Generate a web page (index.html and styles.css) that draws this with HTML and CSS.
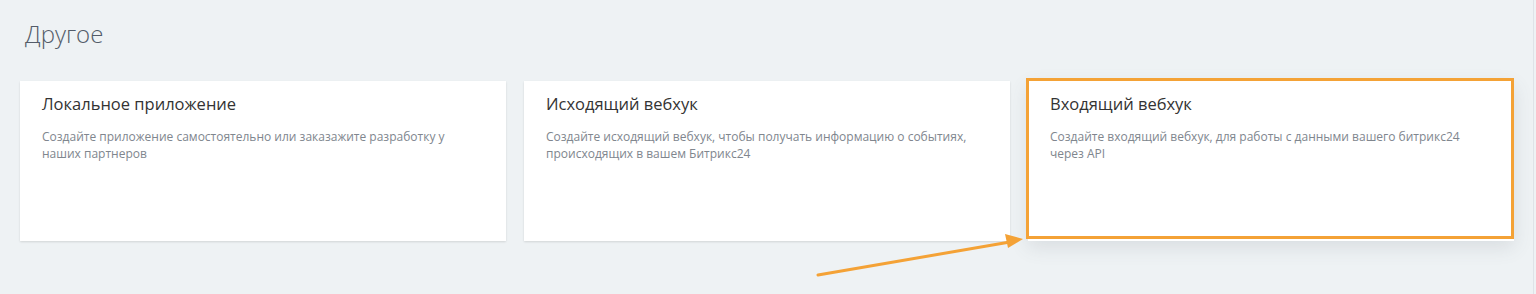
FILE: index.html
```html
<!DOCTYPE html>
<html lang="ru">
<head>
	<meta charset="UTF-8">
	<meta name="viewport" content="width=device-width, initial-scale=1.0">
	<title>Другое</title>
	<link rel="stylesheet" href="styles.css">
</head>
<body>
	<div class="page">
		<h2 class="section-title">Другое</h2>

		<div class="cards">
			<div class="card">
				<div class="card-title">Локальное приложение</div>
				<div class="card-text">Создайте приложение самостоятельно или заказажите разработку у наших партнеров</div>
			</div>
			<div class="card">
				<div class="card-title">Исходящий вебхук</div>
				<div class="card-text">Создайте исходящий вебхук, чтобы получать информацию о событиях, происходящих в вашем Битрикс24</div>
			</div>
			<div class="card card-hover">
				<div class="card-title">Входящий вебхук</div>
				<div class="card-text">Создайте входящий вебхук, для работы с данными вашего битрикс24 через API</div>
			</div>
		</div>

		<!-- пометка поверх скриншота -->
		<div class="mark-box"></div>
		<svg class="mark-arrow" width="220" height="50" viewBox="0 0 220 50">
			<line x1="2" y1="46" x2="194" y2="13" stroke="#f4a236" stroke-width="3" stroke-linecap="round"/>
			<polygon points="207,10 189,5 192,19" fill="#f4a236"/>
		</svg>
	</div>
</body>
</html>
```

FILE: styles.css
```css
*,
*::before,
*::after {
	padding: 0;
	margin: 0;
	box-sizing: border-box;
}
body {
	background: #eef2f4;
	font-family: "Open Sans", "Liberation Sans", sans-serif;
}

.page {
	position: relative;
	width: 1534px;
	height: 294px;
	padding: 19px 20px 0;
	border-right: 1px solid #dfe3e7;
}

.section-title {
	font-size: 24px;
	line-height: 30px;
	font-weight: 300;
	color: #535c69;
	padding-left: 5px;
	margin-bottom: 32px;
}

.cards {
	display: grid;
	grid-template-columns: repeat(3, 486px);
	gap: 18px;
}

.card {
	height: 160px;
	background: #fff;
	padding: 13px 22px 0;
	box-shadow: 0 1px 2px rgba(0, 0, 0, 0.12);
}

.card-hover {
	box-shadow: 0 6px 18px rgba(83, 92, 105, 0.14);
}

.card-title {
	font-size: 16.5px;
	line-height: 20px;
	font-weight: 500;
	color: #333;
	margin-bottom: 14px;
}

.card-text {
	font-size: 12px;
	line-height: 17px;
	color: #80868e;
	max-width: 430px;
}

.mark-box {
	position: absolute;
	left: 1026px;
	top: 78px;
	width: 488px;
	height: 161px;
	border: 3px solid #f4a236;
}

.mark-arrow {
	position: absolute;
	left: 816px;
	top: 229px;
}
```
